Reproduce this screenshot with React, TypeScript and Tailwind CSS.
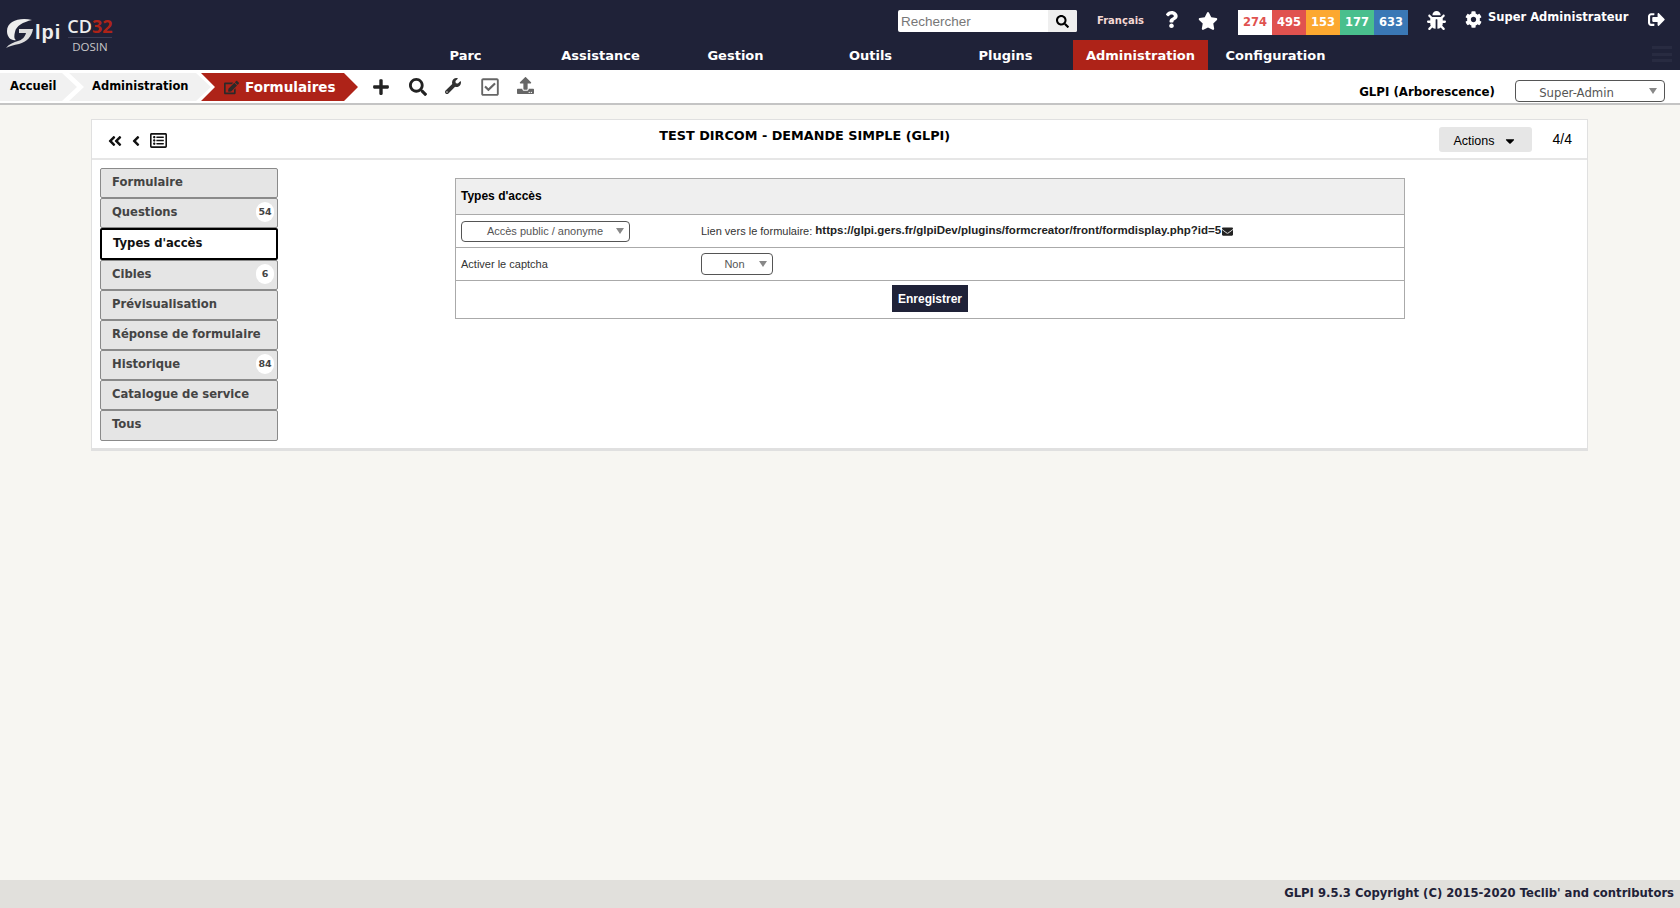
import React from 'react';
import {
  FaAngleDoubleLeft, FaAngleLeft, FaBug, FaCaretDown, FaCog, FaEdit, FaEnvelope, FaPlus,
  FaQuestion, FaRegCheckSquare, FaRegListAlt, FaSearch, FaSignOutAlt, FaStar, FaUpload, FaWrench,
} from 'react-icons/fa';

const verdana = "font-['DejaVu_Sans',sans-serif]";

const menu = ['Parc', 'Assistance', 'Gestion', 'Outils', 'Plugins', 'Administration', 'Configuration'];

const counters = [
  { n: '274', cls: 'bg-white text-[#e0524f]' },
  { n: '495', cls: 'bg-[#e0524f] text-white' },
  { n: '153', cls: 'bg-[#fca830] text-white' },
  { n: '177', cls: 'bg-[#49bf8d] text-white' },
  { n: '633', cls: 'bg-[#3a78b5] text-white' },
];

const tabs = [
  { label: 'Formulaire', h: 'h-[30px]' },
  { label: 'Questions', count: '54', h: 'h-[30px]' },
  { label: "Types d'accès", active: true, h: 'h-[32px]' },
  { label: 'Cibles', count: '6', h: 'h-[30px]' },
  { label: 'Prévisualisation', h: 'h-[30px]' },
  { label: 'Réponse de formulaire', h: 'h-[30px]' },
  { label: 'Historique', count: '84', h: 'h-[30px]' },
  { label: 'Catalogue de service', h: 'h-[30px]' },
  { label: 'Tous', h: 'h-[31px]' },
];

const Logo = () => (
  <div className="flex items-start pl-[6px] pt-[18px] text-white">
    <svg width="28" height="30" viewBox="0 0 28 30" className="shrink-0">
      <path d="M26 2 C14 -1 1 3 1 13 C1 20 6 23 10 22 C8 21 8 18 9 14 C10 8 17 4 26 2 Z" fill="#eeeeee" />
      <path d="M13 11 L27 11 C26 18 21 24 13 26 C8 27 3 28 0 30 C3 26 8 24 12 23 C16 22 19 19 20 15 L13 15 Z" fill="#dddddd" />
    </svg>
    <span className="ml-[1px] mt-[4px] font-['Liberation_Sans',sans-serif] text-[20px] leading-[20px] font-bold tracking-[1px] text-[#eeeeee]">lpi</span>
    <div className="ml-[6px] -mt-[2px] flex flex-col items-center">
      <span className="font-['Open_Sans',sans-serif] text-[18px] leading-[20px] font-semibold text-[#eeeeee]">
        CD<span className="font-bold text-[#ae2318]">32</span>
      </span>
      <span className="mt-[1px] w-[44px] border-t border-[#3a3d55] pt-[1px] text-center font-['Open_Sans',sans-serif] text-[11.5px] leading-[15px] text-[#c8c8c8]">DOSIN</span>
    </div>
  </div>
);

const Select = ({ text, className, textClass, caretClass }: { text: string; className: string; textClass?: string; caretClass?: string }) => (
  <div className={`flex items-center justify-between rounded-[4px] border border-[#555] bg-white text-[#555] ${className}`}>
    <span className={`flex-1 text-center ${textClass ?? ''}`}>{text}</span>
    <span className={`h-0 w-0 border-x-[4px] border-t-[6px] border-x-transparent border-t-[#888] ${caretClass ?? 'mr-[5px]'}`} />
  </div>
);

export default function App() {
  return (
    <div className="flex h-[908px] w-[1680px] flex-col overflow-hidden bg-[#f7f6f2] font-['Liberation_Sans',sans-serif] text-black">
      {/* top header */}
      <header className="flex h-[70px] shrink-0 bg-[#1f2238] text-white">
        <div className="w-[398px] shrink-0">
          <Logo />
        </div>
        <div className="flex flex-1 flex-col">
          <div className="flex h-[40px] items-start pt-[10px]">
            <div className="ml-[500px] flex h-[22px] w-[179px] overflow-hidden rounded-[2px] bg-white">
              <span className="flex-1 pl-[3px] text-[13.5px] leading-[23px] text-[#777]">Rechercher</span>
              <span className="flex w-[29px] items-center justify-center bg-[#efefef] text-black">
                <FaSearch size={13} />
              </span>
            </div>
            <span className={`${verdana} ml-[20px] text-[10px] leading-[22px] font-bold text-[#f5d9d4]`}>Français</span>
            <FaQuestion size={17} className="ml-[19px] mt-[1px]" />
            <FaStar size={20} className="ml-[18px] mt-[1px]" />
            <div className="ml-[20px] flex h-[25px]">
              {counters.map((c) => (
                <span key={c.n} className={`${verdana} ${c.cls} w-[34px] text-center text-[11.5px] leading-[25px] font-bold`}>{c.n}</span>
              ))}
            </div>
            <FaBug size={19} className="ml-[19px] mt-[1px]" />
            <FaCog size={17} className="ml-[19px] mt-[1px]" />
            <span className={`${verdana} ml-[6px] text-[11.5px] leading-[14px] font-bold`}>Super Administrateur</span>
            <FaSignOutAlt size={17} className="ml-[20px] mt-[1px]" />
          </div>
          <nav className="flex h-[30px] items-stretch">
            {menu.map((m) => (
              <span
                key={m}
                className={`${verdana} flex w-[135px] items-center justify-center pt-[2px] text-[13px] font-bold ${m === 'Administration' ? 'bg-[#ae2318]' : ''}`}
              >
                {m}
              </span>
            ))}
            <span className="ml-auto mr-[8px] mt-[6px] flex h-[16px] w-[20px] flex-col justify-between opacity-70">
              <span className="h-[3px] bg-[#2c2f46]" />
              <span className="h-[3px] bg-[#2c2f46]" />
              <span className="h-[3px] bg-[#2c2f46]" />
            </span>
          </nav>
        </div>
      </header>

      {/* breadcrumb bar */}
      <div className="flex h-[35px] shrink-0 items-start border-b-2 border-[#c4c4c4] bg-white pt-[3px]">
        <span className={`${verdana} h-[28px] w-[77px] bg-[#f1f1f1] pl-[10px] text-[11.5px] leading-[26px] font-bold [clip-path:polygon(0_0,62px_0,77px_14px,62px_100%,0_100%)]`}>Accueil</span>
        <span className={`${verdana} -ml-[8px] h-[28px] w-[142px] bg-[#f1f1f1] pl-[23px] text-[11.5px] leading-[26px] font-bold [clip-path:polygon(0_0,127px_0,142px_14px,127px_100%,0_100%,15px_14px)]`}>Administration</span>
        <span className={`${verdana} -ml-[10px] flex h-[28px] w-[157px] items-center bg-[#ae2318] pl-[23px] text-[13.5px] font-bold text-white [clip-path:polygon(0_0,143px_0,157px_14px,143px_100%,0_100%,14px_14px)]`}>
          <FaEdit size={15} className="mr-[6px] text-[#2a2a2a]" />
          Formulaires
        </span>
        <FaPlus size={18} className="ml-[14px] mt-[5px] text-[#222]" />
        <FaSearch size={18} className="ml-[19px] mt-[5px] text-[#222]" />
        <FaWrench size={16} className="ml-[18px] mt-[5px] text-[#333]" />
        <FaRegCheckSquare size={20} className="ml-[19px] mt-[4px] text-[#666]" />
        <FaUpload size={17} className="ml-[17px] mt-[4px] text-[#666]" />
        <span className={`${verdana} ml-auto mt-[12px] text-[11.8px] leading-[14px] font-bold`}>GLPI (Arborescence)</span>
        <Select text="Super-Admin" textClass="pr-[12px] pt-[6px]" caretClass="mr-[7px]" className={`${verdana} ml-[20px] mr-[15px] mt-[7px] h-[22px] w-[150px] text-[11.7px]`} />
      </div>

      {/* main */}
      <main className="flex-1 pl-[91px] pt-[14px]">
        <div className="h-[332px] w-[1497px] border border-b-[3px] border-[#e0e0e0] bg-white">
          <div className="flex h-[40px] items-start border-b-2 border-[#e6e6e6]">
            <div className="flex items-center pl-[15px] pt-[12px] text-[#111]">
              <FaAngleDoubleLeft size={16} />
              <FaAngleLeft size={16} className="ml-[5px]" />
              <FaRegListAlt size={17} className="ml-[6px]" />
            </div>
            <div className={`${verdana} flex-1 pt-[9px] pr-[36px] pl-[40px] text-center text-[12.8px] leading-[14px] font-bold`}>
              TEST DIRCOM - DEMANDE SIMPLE (GLPI)
            </div>
            <div className="mt-[7px] flex h-[25px] w-[93px] items-center justify-center gap-[8px] rounded-[3px] bg-[#e6e6e6] pt-[3px] text-[12.5px]">
              Actions
              <FaCaretDown size={14} />
            </div>
            <span className="mr-[15px] ml-[21px] mt-[7px] text-[14px] leading-[25px]">4/4</span>
          </div>

          <div className="flex">
            {/* tabs */}
            <div className="ml-[8px] mt-[8px] flex w-[178px] shrink-0 flex-col">
              {tabs.map((t) => (
                <div
                  key={t.label}
                  className={`${verdana} ${t.h} relative flex shrink-0 items-start rounded-[2px] pl-[11px] pt-[6px] text-[11.6px] leading-[14px] font-bold ${
                    t.active ? 'border-2 border-black bg-white pl-[11px] text-[#111]' : 'border border-[#8a8a8a] bg-[#e5e5e5] text-[#444]'
                  }`}
                >
                  {t.label}
                  {t.count && (
                    <span className="absolute top-[3px] right-[3px] flex h-[20px] w-[18px] items-center justify-center rounded-full bg-white text-[9.5px]">{t.count}</span>
                  )}
                </div>
              ))}
            </div>

            {/* form */}
            <div className="ml-[177px] mt-[18px] h-[141px] w-[950px] shrink-0 border border-[#aaa] text-[11px]">
              <div className="flex h-[36px] items-center border-b border-[#aaa] bg-[#efefef] pb-[2px] pl-[5px] text-[12px] font-bold">Types d'accès</div>
              <div className="flex h-[33px] items-center border-b border-[#aaa] pl-[5px]">
                <Select text="Accès public / anonyme" textClass="pt-[1px] pl-[2px]" className="h-[21px] w-[169px] pl-[10px] text-[11px]" />
                <span className="ml-[71px] text-[#333]">Lien vers le formulaire:</span>
                <span className="ml-[3px] text-[11.5px] font-bold text-[#222]">https://glpi.gers.fr/glpiDev/plugins/formcreator/front/formdisplay.php?id=5</span>
                <FaEnvelope size={11} className="ml-[1px] text-[#222]" />
              </div>
              <div className="flex h-[33px] items-center border-b border-[#aaa] pl-[5px]">
                <span className="w-[240px] text-[#333]">Activer le captcha</span>
                <Select text="Non" textClass="pl-[8px] pt-[1px]" className="h-[22px] w-[72px] text-[11px]" />
              </div>
              <div className="flex justify-center pt-[4px]">
                <button className="h-[27px] w-[76px] bg-[#1f2238] text-[12px] font-bold text-white">Enregistrer</button>
              </div>
            </div>
          </div>
        </div>
      </main>

      {/* footer */}
      <footer className={`${verdana} h-[28px] shrink-0 bg-[#e1e0dc] pr-[6px] text-right text-[11.6px] leading-[26px] font-bold text-[#1f2238]`}>
        GLPI 9.5.3 Copyright (C) 2015-2020 Teclib' and contributors
      </footer>
    </div>
  );
}
